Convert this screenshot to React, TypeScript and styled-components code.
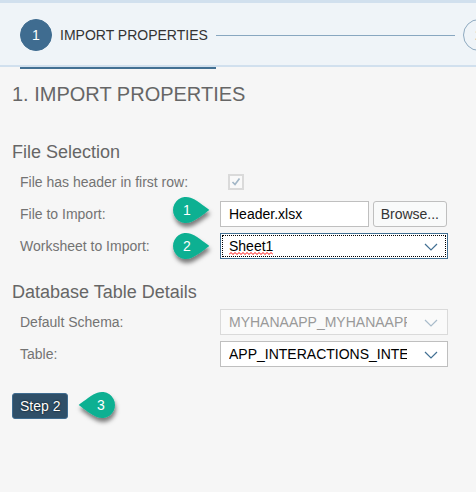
import React, { useState } from "react";
import styled, { createGlobalStyle } from "styled-components";

const GlobalStyle = createGlobalStyle`
  * { box-sizing: border-box; }
  body {
    margin: 0;
    background: #f6f6f6;
    font-family: "Liberation Sans", Arial, sans-serif;
    font-size: 14px;
    color: #666;
  }
  button, input, select { font: inherit; }
`;

const Progress = styled.nav`
  background: #eff4f8;
  border-top: 3px solid #d1e0ee;
  border-bottom: 2px solid #d1e0ee;
  overflow-x: clip;
  overflow-y: visible;
`;

const Steps = styled.ol`
  display: flex;
  align-items: center;
  margin: 0;
  padding: 0 0 0 20px;
  list-style: none;
`;

const StepItem = styled.li<{ $current?: boolean }>`
  position: relative;
  flex: none;
  &::after {
    content: "";
    display: ${(p) => (p.$current ? "block" : "none")};
    position: absolute;
    left: 0;
    right: 0;
    top: 100%;
    margin-top: 2px;
    height: 2px;
    background: #427093;
  }
`;

const StepButton = styled.button`
  display: flex;
  align-items: center;
  gap: 8px;
  padding: 16px 8px 14px 0;
  border: 0;
  background: none;
  color: #333;
  line-height: 32px;
  white-space: nowrap;
`;

const StepNumber = styled.span<{ $current?: boolean }>`
  width: 32px;
  height: 32px;
  border: 1px solid ${(p) => (p.$current ? "#3f6c90" : "#8eaac0")};
  border-radius: 50%;
  background: ${(p) => (p.$current ? "#3f6c90" : "transparent")};
  color: ${(p) => (p.$current ? "#fff" : "#999")};
  line-height: 30px;
  text-align: center;
`;

const StepLine = styled.li`
  flex: 1 0 239px;
  height: 1px;
  margin: 2px 8px 0 0;
  background: #88a7c0;
`;

const Content = styled.main`
  padding: 13px 28px 13px 12px;
`;

const Title = styled.h1`
  margin: 0 0 30px;
  font-size: 20px;
  font-weight: 400;
  line-height: 28px;
`;

const Section = styled.section`
  margin-bottom: 16px;
`;

const SectionTitle = styled.h2`
  margin: 0;
  font-size: 18px;
  font-weight: 400;
  line-height: 28px;
`;

const Row = styled.div`
  display: grid;
  grid-template-columns: 200px minmax(0, 1fr);
  align-items: center;
  height: 32px;
  padding-left: 8px;
`;

const LabelCell = styled.div`
  position: relative;
  color: #737373;
  line-height: 18px;
`;

const CheckBox = styled.span`
  position: relative;
  width: 16px;
  height: 16px;
  margin-left: 8px;
  input {
    appearance: none;
    display: block;
    width: 16px;
    height: 16px;
    margin: 0;
    border: 2px solid #dadada;
    background: #f9f9f9;
  }
  svg {
    position: absolute;
    inset: 0;
    pointer-events: none;
  }
`;

const FileField = styled.div`
  display: flex;
  gap: 4px;
  padding-right: 1px;
`;

const TextInput = styled.input`
  flex: 1;
  min-width: 0;
  height: 26px;
  padding: 0 8px;
  border: 1px solid #bfbfbf;
  border-radius: 0;
  background: #fff;
  color: #000;
  outline: 0;
`;

const ActionButton = styled.button<{ $primary?: boolean }>`
  height: 26px;
  padding: 0 7px;
  border: 1px solid ${(p) => (p.$primary ? "#3f6c90" : "#bfbfbf")};
  border-radius: 3px;
  background: ${(p) => (p.$primary ? "#2f4f68" : "#f9fafa")};
  color: ${(p) => (p.$primary ? "#fff" : "#333")};
  text-shadow: ${(p) => (p.$primary ? "0 0 2px #000" : "none")};
  line-height: 24px;
  white-space: nowrap;
`;

const SelectBox = styled.div<{ $disabled?: boolean; $focused?: boolean }>`
  position: relative;
  height: 26px;
  border: 1px solid ${(p) => (p.$focused ? "#427093" : p.$disabled ? "#dadada" : "#bfbfbf")};
  background: ${(p) => (p.$disabled ? "#fafafa" : "#fff")};
  &::after {
    content: "";
    display: ${(p) => (p.$focused ? "block" : "none")};
    position: absolute;
    inset: 1px;
    border: 1px dotted #000;
    pointer-events: none;
  }
  select {
    appearance: none;
    display: block;
    width: 100%;
    height: 24px;
    padding: 0 40px 0 8px;
    border: 0;
    outline: 0;
    background: none;
    color: ${(p) => (p.$disabled ? "#999" : "#000")};
    opacity: 1;
    text-overflow: clip;
  }
`;

const Chevron = styled.svg`
  position: absolute;
  right: 9px;
  top: 8px;
  pointer-events: none;
`;

const SpellingMark = styled.svg`
  position: absolute;
  left: 8px;
  top: 18px;
  pointer-events: none;
`;

const Footer = styled.footer`
  display: flex;
  padding-top: 7px;
`;

const FooterAction = styled.div`
  position: relative;
`;

type Side = "label" | "button";

const Pin = styled.span<{ $side: Side; $rise: number }>`
  position: absolute;
  top: -${(p) => p.$rise}px;
  ${(p) => (p.$side === "label" ? "right: 11px;" : "left: 67px;")}
  width: 36px;
  height: 26px;
  color: #fff;
  svg {
    display: block;
  }
  b {
    position: absolute;
    top: 0;
    ${(p) => (p.$side === "label" ? "left: 1px;" : "right: 1px;")}
    width: 26px;
    font-weight: 400;
    line-height: 26px;
    text-align: center;
  }
`;

interface CalloutProps {
  side: Side;
  rise: number;
  children: React.ReactNode;
}

function Callout({ side, rise, children }: CalloutProps) {
  const id = `pin-shadow-${children}`;
  return (
    <Pin $side={side} $rise={rise}>
      <svg width="36" height="26" viewBox="0 0 36 26" overflow="visible">
        <defs>
          <filter id={id} x="-30%" y="-30%" width="160%" height="180%">
            <feDropShadow dx="1" dy="4" stdDeviation="2" floodColor="#000" floodOpacity="0.5" />
          </filter>
        </defs>
        <g filter={`url(#${id})`}>
          <path
            transform={side === "button" ? "translate(36 0) scale(-1 1)" : undefined}
            d="M36.3 13C31 9 22 2 17.5 .8A13 13 0 1 0 17.5 25.2C22 24 31 17 36.3 13Z"
            fill="#09b092"
          />
        </g>
      </svg>
      <b>{children}</b>
    </Pin>
  );
}

interface DropDownProps {
  id: string;
  value: string;
  disabled?: boolean;
  focused?: boolean;
  misspelt?: boolean;
}

function DropDown({ id, value, disabled, focused, misspelt }: DropDownProps) {
  return (
    <SelectBox $disabled={disabled} $focused={focused}>
      <select id={id} disabled={disabled} defaultValue={value}>
        <option value={value}>{value}</option>
      </select>
      {misspelt && (
        <SpellingMark width="44" height="3" viewBox="0 0 44 3">
          <path
            d={"M0 2.5" + Array.from({ length: 11 }, () => "l2 -2l2 2").join("")}
            fill="none"
            stroke="#f00"
            strokeWidth="1"
          />
        </SpellingMark>
      )}
      <Chevron width="14" height="10" viewBox="0 0 14 10">
        <path
          d="M1 2L7 8L13 2"
          fill="none"
          stroke={disabled ? "#a9bccb" : "#427093"}
          strokeWidth="1.2"
        />
      </Chevron>
    </SelectBox>
  );
}

export default function App() {
  const [fileName, setFileName] = useState("Header.xlsx");
  return (
    <>
      <GlobalStyle />
      <Progress aria-label="Import steps">
        <Steps>
          <StepItem $current>
            <StepButton type="button" aria-current="step">
              <StepNumber $current>1</StepNumber>
              IMPORT PROPERTIES
            </StepButton>
          </StepItem>
          <StepLine aria-hidden="true" />
          <StepItem>
            <StepButton type="button">
              <StepNumber>2</StepNumber>
            </StepButton>
          </StepItem>
        </Steps>
      </Progress>
      <Content>
        <Title>1. IMPORT PROPERTIES</Title>
        <Section>
          <SectionTitle>File Selection</SectionTitle>
          <Row>
            <LabelCell>
              <label htmlFor="has-header">File has header in first row:</label>
            </LabelCell>
            <CheckBox>
              <input id="has-header" type="checkbox" defaultChecked disabled />
              <svg width="16" height="16" viewBox="0 0 16 16">
                <path d="M4.5 8L7 10.5L11.5 4.5" fill="none" stroke="#a3b7c7" strokeWidth="1.7" />
              </svg>
            </CheckBox>
          </Row>
          <Row>
            <LabelCell>
              <label htmlFor="file">File to Import:</label>
              <Callout side="label" rise={8}>1</Callout>
            </LabelCell>
            <FileField>
              <TextInput
                id="file"
                type="text"
                value={fileName}
                onChange={(e) => setFileName(e.target.value)}
              />
              <ActionButton type="button">Browse...</ActionButton>
            </FileField>
          </Row>
          <Row>
            <LabelCell>
              <label htmlFor="worksheet">Worksheet to Import:</label>
              <Callout side="label" rise={4}>2</Callout>
            </LabelCell>
            <DropDown id="worksheet" value="Sheet1" focused misspelt />
          </Row>
        </Section>
        <Section>
          <SectionTitle>Database Table Details</SectionTitle>
          <Row>
            <LabelCell>
              <label htmlFor="schema">Default Schema:</label>
            </LabelCell>
            <DropDown id="schema" value="MYHANAAPP_MYHANAAPP" disabled />
          </Row>
          <Row>
            <LabelCell>
              <label htmlFor="table">Table:</label>
            </LabelCell>
            <DropDown id="table" value="APP_INTERACTIONS_INTERACTIONS" />
          </Row>
        </Section>
        <Footer>
          <FooterAction>
            <ActionButton type="button" $primary>
              Step 2
            </ActionButton>
            <Callout side="button" rise={1}>3</Callout>
          </FooterAction>
        </Footer>
      </Content>
    </>
  );
}
